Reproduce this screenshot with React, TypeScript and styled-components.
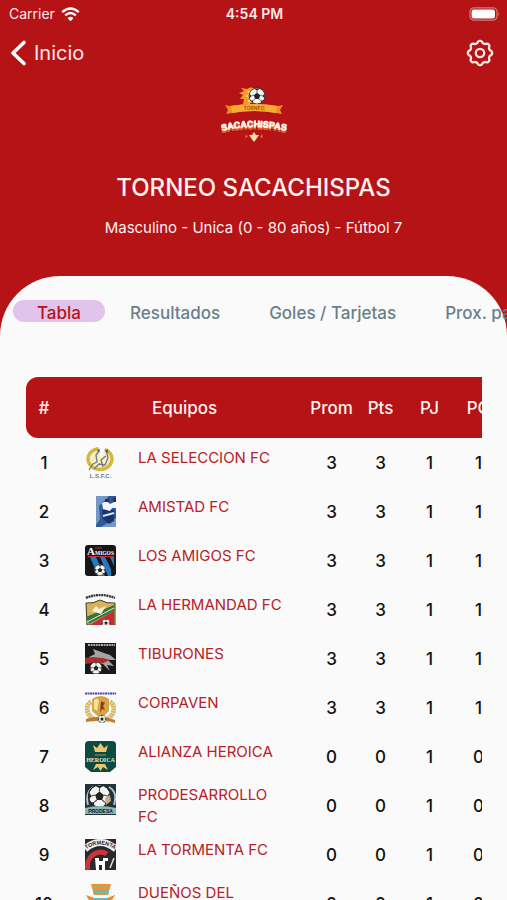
import React from "react";
import styled, { createGlobalStyle, css } from "styled-components";

const red = "#b51316";
const paper = "#fafafa";

const Global = createGlobalStyle`
  *, *::before, *::after { box-sizing: border-box; }
  html, body { margin: 0; }
  body {
    background: ${red};
    color: #111;
    font-family: Inter, "Liberation Sans", sans-serif;
  }
`;

const Screen = styled.div`
  display: flex;
  flex-direction: column;
  height: 100vh;
  overflow: hidden;
  background: ${red};
`;

const StatusBar = styled.div`
  display: grid;
  grid-template-columns: 1fr auto 1fr;
  align-items: center;
  height: 28px;
  padding: 0 7px 0 9px;
  color: #ffe9e6;
  font-size: 14px;
  line-height: 20px;
`;

const Carrier = styled.span`
  display: flex;
  align-items: center;
  gap: 6px;
`;

const Clock = styled.time`
  font-weight: 600;
`;

const BatterySlot = styled.span`
  display: flex;
  justify-content: flex-end;
`;

const NavBar = styled.nav`
  display: flex;
  align-items: center;
  justify-content: space-between;
  height: 50px;
  padding: 0 13px 0 9px;
`;

const BackLink = styled.a`
  display: flex;
  align-items: center;
  gap: 6px;
  color: #ffe9e6;
  font-size: 20px;
  line-height: 28px;
  text-decoration: none;
`;

const IconButton = styled.button`
  display: flex;
  padding: 0;
  border: 0;
  background: none;
  color: #ffe9e6;
  cursor: pointer;
`;

const Hero = styled.header`
  display: flex;
  flex-direction: column;
  align-items: center;
  padding: 8px 16px 38px;
  color: #fff1ee;
  text-align: center;
`;

const Title = styled.h1`
  margin: 30px 0 14px;
  font-size: 24px;
  font-weight: 500;
  line-height: 32px;
`;

const Subtitle = styled.p`
  margin: 0;
  font-size: 15px;
  line-height: 20px;
`;

const Panel = styled.main`
  flex: 1;
  min-height: 0;
  padding-top: 24px;
  border-radius: 60px 60px 0 0;
  background: ${paper};
`;

const Tabs = styled.div`
  display: flex;
  gap: 47px;
  padding-left: 13px;
  overflow-x: auto;
  scrollbar-width: none;
`;

const Tab = styled.button<{ $active?: boolean }>`
  flex: none;
  height: 22px;
  padding: 0 1px;
  border: 0;
  border-radius: 12px;
  background: none;
  color: #6b7f8a;
  font: 500 17px/26px Inter, "Liberation Sans", sans-serif;
  white-space: nowrap;
  cursor: pointer;
  ${(p) =>
    p.$active &&
    css`
      width: 92px;
      margin-right: -23px;
      background: #e2c3ec;
      color: ${red};
    `}
`;

const TableScroll = styled.div`
  margin: 55px 25px 0 26px;
  overflow-x: auto;
  overflow-y: hidden;
  scrollbar-width: none;
`;

const Table = styled.table`
  width: 477px;
  table-layout: fixed;
  border-spacing: 0;
`;

const Column = styled.col<{ $width: number }>`
  width: ${(p) => p.$width}px;
`;

const HeadCell = styled.th`
  height: 61px;
  padding: 0;
  background: ${red};
  color: #fff1ee;
  font-size: 17px;
  font-weight: 500;
  text-align: center;
  &:first-child { border-radius: 12px 0 0 12px; }
  &:last-child { border-radius: 0 12px 12px 0; }
`;

const Cell = styled.td`
  height: 49px;
  padding: 0;
  font-size: 17px;
  font-weight: 500;
  text-align: center;
`;

const Team = styled.div`
  display: flex;
  align-items: flex-start;
  gap: 22px;
  padding: 0 24px 0 23px;
  text-align: left;
`;

const TeamLink = styled.a`
  flex: 1;
  color: #b82126;
  font-size: 15px;
  font-weight: 400;
  line-height: 22px;
  text-decoration: none;
`;

const CrestBox = styled.svg`
  display: block;
  flex: none;
  width: 31px;
  height: 31px;
`;

const Wordmark = styled.text`
  fill: #fff8ef;
  stroke: #fff8ef;
  stroke-width: 0.8px;
  font: 700 9px "Liberation Sans", sans-serif;
  text-anchor: middle;
  filter: drop-shadow(0 2px 0 #e5632a);
`;

const WifiIcon = () => (
  <svg width="19" height="15" viewBox="0 0 19 15" aria-hidden="true" fill="none" stroke="#fff" strokeWidth="2.4">
    <path d="M1.2 5.2Q9.5-2 17.8 5.2" />
    <path d="M4.2 8.4Q9.5 3.8 14.8 8.4" />
    <path d="M6.6 11.2Q9.5 8.4 12.4 11.2L9.5 14.2Z" fill="#fff" stroke="none" />
  </svg>
);

const BatteryIcon = () => (
  <svg width="31" height="14" viewBox="0 0 31 14" aria-hidden="true">
    <rect x="1" y=".8" width="27" height="12.4" rx="4" fill="none" stroke="#d8797a" strokeWidth="1.2" />
    <rect x="2.6" y="2.4" width="23.4" height="9.2" rx="2.4" fill="#fff" />
    <path d="M29.2 4.8Q31 7 29.2 9.2Z" fill="#d8797a" />
  </svg>
);

const BackIcon = () => (
  <svg width="19" height="28" viewBox="0 0 19 28" aria-hidden="true">
    <path d="M15 3.5L4 14l11 10.5" fill="none" stroke="#fff" strokeWidth="3.6" strokeLinecap="round" strokeLinejoin="round" />
  </svg>
);

const gearOutline =
  Array.from({ length: 96 }, (_, i) => {
    const angle = (i / 96) * Math.PI * 2;
    const wave = Math.cos(angle * 8);
    const radius = 11.1 + 1.1 * Math.tanh(wave * 1.6);
    const x = 14 + radius * Math.cos(angle);
    const y = 14 + radius * Math.sin(angle);
    return `${i ? "L" : "M"}${x.toFixed(2)} ${y.toFixed(2)}`;
  }).join("") + "Z";

const GearIcon = () => (
  <svg width="28" height="28" viewBox="0 0 28 28" aria-hidden="true" fill="none" stroke="currentColor" strokeWidth="2.3" strokeLinejoin="round">
    <path d={gearOutline} />
    <circle cx="14" cy="14" r="4.2" />
  </svg>
);

const Ball = ({ x, y, r }: { x: number; y: number; r: number }) => (
  <g transform={`translate(${x} ${y}) scale(${r / 10})`}>
    <circle r="10" fill="#f4f4f2" stroke="#222" strokeWidth="1" />
    <path
      d="M0-4L4-1 2.4 3.6H-2.4L-4-1ZM-3.5-9.2H3.5L0-7ZM9.3-3L9.6 3 7 0ZM5 8.4L8 5.6 4.8 5.6ZM-5 8.4L-8 5.6-4.8 5.6ZM-9.3-3L-9.6 3-7 0Z"
      fill="#222"
    />
    <path d="M0-7V-4M4-1L7 0M2.4 3.6L4.8 5.6M-2.4 3.6L-4.8 5.6M-4-1L-7 0" stroke="#444" strokeWidth="1" />
  </g>
);

const TournamentLogo = () => (
  <svg width="72" height="56" viewBox="-1 0 72 56" role="img" aria-label="Torneo Sacachispas">
    <path d="M37 3Q31 0 28 3L22 2 25 5 20 7 24 9 21 13 25 13 24 18 31 18Z" fill="#f39b2d" />
    <path d="M36 5L28 5 30 8 26 10 30 12 29 16 34 17Z" fill="#ffd267" />
    <Ball x={38} y={10} r={8} />
    <path d="M10 20Q35 16 60 20L64 19 61 24 63 28 57 27Q35 23 13 27L7 28 9 24 6 19Z" fill="#ef8d20" />
    <path d="M12 20Q35 16 58 20L57 27Q35 23 13 27Z" fill="#f8ab32" />
    <text x="35" y="24" fontSize="5" fontFamily="Inter" fontWeight="700" fill="#b65a12" textAnchor="middle">TORNEO</text>
    <path id="wordmark-curve" d="M-1 46Q35 36 71 46" fill="none" />
    <Wordmark>
      <textPath href="#wordmark-curve" startOffset="50%">SACACHISPAS</textPath>
    </Wordmark>
    <path d="M35 46L37 49 40 49 38 52 35 56 32 52 30 49 33 49Z" fill="#f8ddb0" />
    <path d="M27 48L29 51 26 52ZM43 48L41 51 44 52Z" fill="#e66b2b" />
  </svg>
);

const crests: Record<string, React.ReactNode> = {
  seleccion: (
    <>
      <ellipse cx="15" cy="12" rx="12" ry="10.5" fill="#f5edc8" stroke="#d2b93a" strokeWidth="3.4" />
      <path d="M13 -1L16 12 21 -1" fill="#fafafa" />
      <path d="M4 23L8 17 12 15 11 8 14 4M9 22L14 17 20 18 23 11 21 3M18 20L16 13 21 9" fill="none" stroke="#77777c" strokeWidth="1.3" />
      <path d="M12 3L15 2 14 6ZM20 4L23 2 23 6Z" fill="#5c5c60" />
      <text x="15.5" y="30.5" fontSize="6" fontFamily="Liberation Sans" fontWeight="700" fill="#77777b" textAnchor="middle">L.S.F.C.</text>
    </>
  ),
  amistad: (
    <>
      <rect x="11" width="20" height="31" fill="#31599a" />
      <path d="M11 0H24L14 10 15 23 11 29ZM31 22V31H16Z" fill="#7597c8" />
      <path d="M17 14H29V25L24 28 18 23Z" fill="#16366f" />
      <path d="M17 7L22 5 25 8 31 5V12L27 12 25 15 18 13Z" fill="#f2f4f8" />
      <path d="M20 3H24V6H20ZM28 2H31V6H28Z" fill="#2d3048" />
      <path d="M18 20L29 17" stroke="#dbe5f2" strokeWidth="2" />
    </>
  ),
  amigos: (
    <>
      <rect width="31" height="31" rx="3" fill="#17171b" />
      <path d="M5 12H11L20 31H13ZM15 12H20L26 24V31H23ZM25 12H29V21Z" fill="#2979bd" />
      <text x="2" y="10" fontSize="11" fontFamily="Liberation Serif" fontWeight="700" fill="#fff">A</text>
      <text x="10" y="9.5" fontSize="5.5" fontFamily="Liberation Serif" fontWeight="700" fill="#fff">MIGOS</text>
      <path d="M10 3H17M3 11.5H29" stroke="#bb3239" strokeWidth="1.2" />
      <Ball x={15} y={25} r={5.5} />
    </>
  ),
  hermandad: (
    <>
      <path d="M1 4Q15-2 30 4" fill="none" stroke="#343434" strokeWidth="2.4" strokeDasharray="2 .6" />
      <path d="M1 9Q8 10 15 6Q22 10 30 9V31H2Z" fill="#d9b25c" stroke="#343c24" />
      <path d="M1 23L29 11V17L4 30Z" fill="#347640" />
      <path d="M6 30L29 17V31H6Z" fill="#c92b32" />
      <path d="M7 17L11 12 14 15 21 12 16 20Z" fill="#f8efd4" />
      <path d="M2 28L29 14" stroke="#f3e6cf" strokeWidth="1" />
      <Ball x={21} y={29} r={4} />
    </>
  ),
  tiburones: (
    <>
      <rect width="31" height="31" fill="#19191b" />
      <path d="M3 2H30" stroke="#a8a8a8" strokeWidth="1.8" strokeDasharray="2 .6" />
      <path d="M4 14L10 11 8 6 19 10 25 12 31 17 23 17 29 23 22 22 25 28 18 21 8 19Z" fill="#a4a4a5" />
      <path d="M0 15L8 14 18 15 25 17 16 21 8 20 0 21Z" fill="#aa2d2d" />
      <Ball x={11} y={25} r={6} />
    </>
  ),
  corpaven: (
    <>
      <path d="M0 1.5H31" stroke="#4c4ba9" strokeWidth="1.8" strokeDasharray="2 .5" />
      <path d="M6 10C-1 14 2 24 10 28M25 10C32 14 29 24 21 28" fill="none" stroke="#d8b45a" strokeWidth="5" strokeDasharray="2 .6" />
      <path d="M7 7Q16 1 24 7L24 19 16 27 7 19Z" fill="#d6a641" />
      <path d="M9 8Q13 5 14 9L12 19 9 17Z" fill="#f6dda0" />
      <path d="M16 9L20 11 18 14 20 18 17 17 15 21Z" fill="#8d3825" />
      <path d="M1 27Q15 22 30 28V31L23 29H8L1 30Z" fill="#b68132" />
      <Ball x={17} y={27} r={4} />
    </>
  ),
  heroica: (
    <>
      <path d="M0 4Q0 0 4 0H27Q31 0 31 4V26L25 31H6L0 26Z" fill="#0c4b43" />
      <path d="M8 4L12 7 15.5 2 19 7 23 4 21 11H10ZM8 29L11 23H20L23 29 18 26 15.5 30 13 26Z" fill="#ecc66c" />
      <path d="M10 14H21" stroke="#8ca17b" strokeWidth="1" />
      <text x="15.5" y="20.5" fontSize="6" fontFamily="Liberation Serif" fontWeight="700" fill="#eee6b8" textAnchor="middle">HEROICA</text>
    </>
  ),
  prodesarrollo: (
    <>
      <rect width="31" height="31" fill="#20333d" />
      <path d="M3 21Q0 9 8 3M29 21Q33 8 24 3" fill="none" stroke="#b0c4ca" strokeWidth="2" />
      <Ball x={14.5} y={12} r={11} />
      <path d="M20 14L25 11 26 17 21 21Z" fill="#c9a98a" />
      <path d="M0 24Q15 20 31 24V30H0Z" fill="#8fb7b0" />
      <text x="15.5" y="29" fontSize="5" fontFamily="Liberation Sans" fontWeight="700" fill="#111" textAnchor="middle">PRODESA</text>
    </>
  ),
  tormenta: (
    <>
      <rect width="31" height="31" fill="#29292c" />
      <path d="M0 10Q15-3 31 10" fill="none" stroke="#eee" strokeWidth="7" />
      <path id="tormenta-curve" d="M-1 12Q15-1 32 12" fill="none" />
      <text fontSize="5.5" fontFamily="Liberation Sans" fontWeight="700" fill="#222" textAnchor="middle">
        <textPath href="#tormenta-curve" startOffset="50%">TORMENTA</textPath>
      </text>
      <path d="M3 31A13 14 0 0 1 22 15" fill="none" stroke="#cc343b" strokeWidth="5" />
      <path d="M10 19H14V22H18V19H23V22H20V31H17V26H14V31H11Z" fill="#fff" />
      <path d="M25 29L29 19" stroke="#ddd" strokeWidth="1.5" />
    </>
  ),
  duenos: (
    <>
      <path d="M6 2H26L23 13H9Z" fill="#ef9032" />
      <path d="M7 5H25" stroke="#b7a957" strokeWidth="2" />
      <path d="M8 10H24" stroke="#59bfc0" strokeWidth="3" />
      <path d="M1 13L9 16H22L30 13 26 20 25 31H6L5 20Z" fill="#ed8930" />
      <path d="M8 16H23V31H8Z" fill="#59bfc0" />
      <path d="M10 20H21" stroke="#f4d080" strokeWidth="2" />
    </>
  ),
};

const Crest = ({ name }: { name: string }) => (
  <CrestBox viewBox="0 0 31 31" aria-hidden="true">
    {crests[name]}
  </CrestBox>
);

const teams = [
  { name: "LA SELECCION FC", crest: "seleccion", points: 3 },
  { name: "AMISTAD FC", crest: "amistad", points: 3 },
  { name: "LOS AMIGOS FC", crest: "amigos", points: 3 },
  { name: "LA HERMANDAD FC", crest: "hermandad", points: 3 },
  { name: "TIBURONES", crest: "tiburones", points: 3 },
  { name: "CORPAVEN", crest: "corpaven", points: 3 },
  { name: "ALIANZA HEROICA", crest: "heroica", points: 0 },
  { name: "PRODESARROLLO FC", crest: "prodesarrollo", points: 0 },
  { name: "LA TORMENTA FC", crest: "tormenta", points: 0 },
  { name: "DUEÑOS DEL BALÓN", crest: "duenos", points: 0 },
];

const stats = ["Prom", "Pts", "PJ", "PG"];

export default function App() {
  return (
    <>
      <Global />
      <Screen>
        <StatusBar>
          <Carrier>
            Carrier <WifiIcon />
          </Carrier>
          <Clock>4:54 PM</Clock>
          <BatterySlot>
            <BatteryIcon />
          </BatterySlot>
        </StatusBar>
        <NavBar>
          <BackLink href="#inicio">
            <BackIcon />
            Inicio
          </BackLink>
          <IconButton type="button" aria-label="Ajustes">
            <GearIcon />
          </IconButton>
        </NavBar>
        <Hero>
          <TournamentLogo />
          <Title>TORNEO SACACHISPAS</Title>
          <Subtitle>Masculino - Unica (0 - 80 años) - Fútbol 7</Subtitle>
        </Hero>
        <Panel>
          <Tabs role="tablist">
            <Tab role="tab" aria-selected $active>Tabla</Tab>
            <Tab role="tab">Resultados</Tab>
            <Tab role="tab">Goles / Tarjetas</Tab>
            <Tab role="tab">Prox. partidos</Tab>
          </Tabs>
          <TableScroll>
            <Table>
              <colgroup>
                <Column $width={36} />
                <Column $width={245} />
                {stats.map((s) => (
                  <Column key={s} $width={49} />
                ))}
              </colgroup>
              <thead>
                <tr>
                  <HeadCell>#</HeadCell>
                  <HeadCell>Equipos</HeadCell>
                  {stats.map((s) => (
                    <HeadCell key={s}>{s}</HeadCell>
                  ))}
                </tr>
              </thead>
              <tbody>
                {teams.map((team, i) => (
                  <tr key={team.name}>
                    <Cell>{i + 1}</Cell>
                    <Cell>
                      <Team>
                        <Crest name={team.crest} />
                        <TeamLink href={`#${team.crest}`}>{team.name}</TeamLink>
                      </Team>
                    </Cell>
                    <Cell>{team.points}</Cell>
                    <Cell>{team.points}</Cell>
                    <Cell>1</Cell>
                    <Cell>{team.points ? 1 : 0}</Cell>
                  </tr>
                ))}
              </tbody>
            </Table>
          </TableScroll>
        </Panel>
      </Screen>
    </>
  );
}
